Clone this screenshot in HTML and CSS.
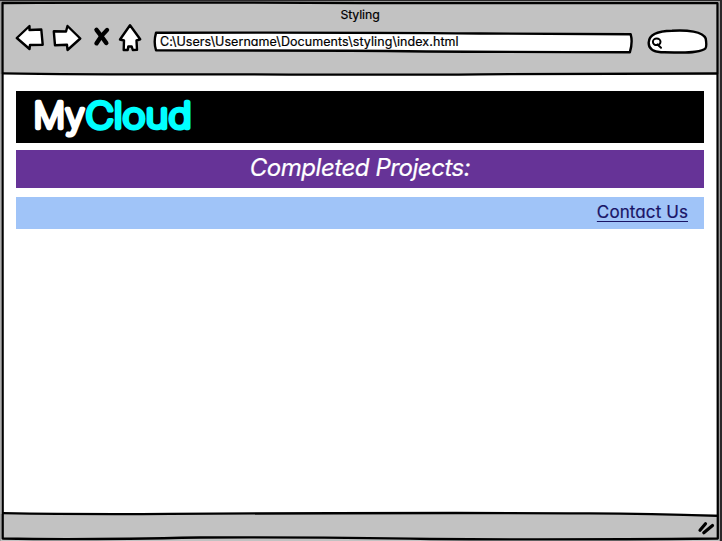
FILE: index.html
```html
<!DOCTYPE html>
<html lang="en">
<head>
<meta charset="utf-8">
<title>Styling</title>
<link rel="stylesheet" href="styles.css">
</head>
<body>
<div class="window">
  <header class="chrome">
    <div class="title">Styling</div>
    <div class="toolbar">
      <svg class="nav" width="140" height="34" viewBox="10 21 140 34" aria-hidden="true">
        <g class="outline">
          <path d="M16.8 38 L29.5 26 L29.5 30 L41.3 29.5 L42.7 44.7 L30 45 L29.5 49 Z"/>
          <path d="M53.8 31.3 L66 31.5 L67.5 26 L80.3 38.5 L67.5 50 L67 44.8 L55 45.3 Z"/>
          <path d="M130 25.2 L140.2 39.3 L136.5 40.5 L137 49.7 L132.8 50 L131.7 46.5 L128.3 46.5 L127.7 50 L123.7 50 L124 40.5 L120 39.5 Z"/>
        </g>
        <g class="cross"><path d="M96.5 29.8 Q101 35.5 106.3 43"/><path d="M107 30 Q101 35.5 96.5 43.3"/></g>
      </svg>
      <div class="address">
        <svg class="field" width="482" height="26" viewBox="152 29 482 26" aria-hidden="true"><g class="outline"><path d="M156 32.8 Q340 32.2 480 33.5 Q560 33.6 630.7 34.3 Q632.9 42 629.9 52.2 Q470 52 350 50.7 Q250 50.5 156 50.2 Q153.4 42 156 32.8 Z"/></g></svg>
        <span class="url">C:\Users\Username\Documents\styling\index.html</span>
      </div>
      <svg class="search" width="62" height="28" viewBox="646 28 62 28" aria-hidden="true">
        <g class="outline"><path d="M648.7 42.5 C649 34.5 657 30.9 672 30.7 C687 29.7 703 31.5 705.7 38.5 C707.5 49 706.5 50 695 51.7 C684 53.5 674 52 661 52.3 C651 51.5 648.5 47 648.7 42.5 Z"/></g>
        <g class="lens"><ellipse cx="656.7" cy="41.8" rx="3.8" ry="3.3"/><path d="M657.5 44.4 L661 47.7"/></g>
      </svg>
    </div>
  </header>
  <main class="page">
    <div class="brand">
      <svg width="170" height="52" viewBox="26 91 170 52" role="img" aria-label="MyCloud">
        <text class="my" x="33.6" y="128.4" textLength="51" lengthAdjust="spacingAndGlyphs">My</text>
        <text class="cloud" x="85.5" y="128.4" textLength="106" lengthAdjust="spacingAndGlyphs">Cloud</text>
      </svg>
    </div>
    <h1 class="heading"><span>Completed Projects:</span></h1>
    <div class="contact"><a class="link">Contact Us</a></div>
  </main>
  <footer class="status"></footer>
  <svg class="frame" width="722" height="541" viewBox="0 0 722 541" aria-hidden="true">
    <path class="shade" d="M0 .5 H722 M721 0 V541"/>
    <path class="rim" d="M0 1.5 H719.5 M719.5 1 V541 M.3 2 V541"/>
    <path class="line" d="M2.5 3 Q160 2 360 3.2 H717.5 Q716.8 280 717.8 538.5 Q560 540 430 539 Q330 537 200 537.5 Q80 540 2.7 538.5 Q1.5 280 2.5 3 Z"/>
    <path class="line" d="M3 73.3 Q80 74.5 240 74.3 Q400 75 480 74.3 Q580 73.5 717 73.5"/>
    <path class="line" d="M3 513.2 Q80 514.5 170 513.9 Q420 512.5 590 513.3 Q650 513.7 717 515.8"/>
    <path class="grip" d="M700 530.3 L705.5 523.7 M703.8 532.7 L712.5 525.5"/>
  </svg>
</div>
</body>
</html>
```
FILE: styles.css
```css
* {
  box-sizing: border-box;
}

body {
  margin: 0;
  font-family: Inter, "Liberation Sans", sans-serif;
  font-feature-settings: "cv11";
  background: #fff;
  overflow: hidden;
}

.window {
  position: relative;
  display: flex;
  flex-direction: column;
  width: 722px;
  height: 541px;
}

.chrome {
  height: 74px;
  padding-top: 7px;
  background: #c2c2c2;
}

.title {
  height: 14px;
  line-height: 15px;
  text-align: center;
  text-indent: -2px;
  font-size: 12.3px;
  letter-spacing: -0.1px;
  -webkit-text-stroke: 0.2px #000;
}

.toolbar {
  display: flex;
  align-items: flex-start;
  padding-left: 10px;
}

.toolbar svg {
  flex: none;
  display: block;
}

.outline {
  fill: #fff;
  stroke: #000;
  stroke-width: 2.4;
  stroke-linejoin: round;
}

.cross {
  fill: none;
  stroke: #000;
  stroke-width: 4.4;
  stroke-linecap: round;
}

.address {
  display: grid;
  margin: 8px 0 0 2px;
}

.field,
.url {
  grid-area: 1 / 1;
}

.url {
  padding-left: 8px;
  line-height: 26px;
  font-size: 12.5px;
  letter-spacing: 0.07px;
  white-space: nowrap;
  -webkit-text-stroke: 0.2px #000;
}

.search {
  margin: 7px 0 0 12px;
}

.lens {
  fill: none;
  stroke: #000;
  stroke-width: 2;
  stroke-linecap: round;
}

.page {
  flex: 1;
  padding: 17px 18px 0 16px;
}

.brand {
  height: 52px;
  padding-left: 10px;
  background: #000;
}

.brand svg {
  display: block;
}

.brand text {
  font: 200 35px Inter, "Liberation Sans", sans-serif;
  stroke-width: 4.3;
  stroke-linejoin: round;
}

.my {
  fill: #fff;
  stroke: #fff;
}

.cloud {
  fill: #0ff;
  stroke: #0ff;
}

.heading {
  height: 38px;
  margin: 7px 0 9px;
  line-height: 36px;
  text-align: center;
  color: #fff;
  background: #663397;
  font-size: 24px;
  font-weight: 400;
  font-style: italic;
  letter-spacing: -0.45px;
  -webkit-text-stroke: 0.2px #fff;
}

.contact {
  height: 32px;
  padding-right: 16px;
  line-height: 31px;
  text-align: right;
  background: #a0c4f8;
}

.link {
  color: #191466;
  font-size: 17px;
  letter-spacing: 0.1px;
  text-decoration: underline;
  text-decoration-thickness: 1px;
  text-underline-offset: 3px;
  -webkit-text-stroke: 0.2px #191466;
}

.status {
  height: 27px;
  background: #c2c2c2;
}

.frame {
  position: absolute;
  inset: 0;
  fill: none;
}

.line {
  stroke: #000;
  stroke-width: 2.3;
  stroke-linejoin: round;
}

.shade {
  stroke: #2b292b;
  stroke-width: 2;
}

.rim {
  stroke: #999;
  stroke-width: 1;
}

.grip {
  stroke: #000;
  stroke-width: 3.2;
  stroke-linecap: round;
}
```
